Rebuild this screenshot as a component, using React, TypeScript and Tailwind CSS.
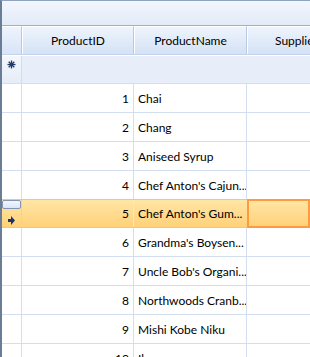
import React from "react";

const rows: [number, string][] = [
  [1, "Chai"],
  [2, "Chang"],
  [3, "Aniseed Syrup"],
  [4, "Chef Anton's Cajun..."],
  [5, "Chef Anton's Gum..."],
  [6, "Grandma's Boysen..."],
  [7, "Uncle Bob's Organi..."],
  [8, "Northwoods Cranb..."],
  [9, "Mishi Kobe Niku"],
  [10, "Ikura"],
];

const font = { fontFamily: '"Segoe UI", Lato, "Liberation Sans", sans-serif' };

export default function App() {
  return (
    <div
      className="w-[310px] h-[357px] overflow-hidden bg-white border-l-2 border-t border-l-[#6b7c96] border-t-[#8fa2bf] flex flex-col text-[12px] text-black"
      style={font}
    >
      {/* group panel */}
      <div className="h-[25px] shrink-0 bg-gradient-to-b from-[#f2f6fd] to-[#e3ebf8] border-b border-[#9eb0cb]" />
      {/* header */}
      <div className="h-[29px] shrink-0 flex border-b border-[#c5d3ea]">
        <div className="w-[20px] shrink-0 bg-gradient-to-b from-[#eef4fc] to-[#d7e4f7] border-r border-[#b9c9e2] border-t border-t-white" />
        <div className="w-[112px] shrink-0 flex items-center justify-center bg-gradient-to-b from-[#eef4fc] to-[#d4e2f6] border-r border-[#b9c9e2] border-l border-l-white border-t border-t-white">
          ProductID
        </div>
        <div className="w-[113px] shrink-0 flex items-center justify-center bg-gradient-to-b from-[#eef4fc] to-[#d4e2f6] border-r border-[#b9c9e2] border-l border-l-white border-t border-t-white">
          ProductName
        </div>
        <div className="flex-1 min-w-0 flex items-center pl-[27px] whitespace-nowrap overflow-hidden bg-gradient-to-b from-[#eef4fc] to-[#d4e2f6] border-l border-l-white border-t border-t-white">
          SupplierID
        </div>
      </div>
      {/* new row */}
      <div className="h-[29px] shrink-0 flex border-b border-[#d3def0] border-t border-t-white">
        <div className="w-[20px] shrink-0 bg-gradient-to-b from-[#f4f7fc] to-[#e6edf8] border-r border-[#d0dcef] flex justify-center pt-[1px]">
          <svg width="9" height="9" viewBox="0 0 9 9" className="mt-[3px]">
            <g stroke="#1f3a6b" strokeWidth="1.3">
              <line x1="4.5" y1="0.5" x2="4.5" y2="8.5" />
              <line x1="0.5" y1="4.5" x2="8.5" y2="4.5" />
              <line x1="1.7" y1="1.7" x2="7.3" y2="7.3" />
              <line x1="7.3" y1="1.7" x2="1.7" y2="7.3" />
            </g>
          </svg>
        </div>
        <div className="flex-1 bg-[#e8eef9]" />
      </div>
      {rows.map(([id, name]) => {
        const sel = id === 5;
        if (sel) {
          return (
            <div key={id} className="h-[29px] shrink-0 flex border-y border-[#ffc65a] bg-gradient-to-b from-[#ffe6a6] to-[#ffd178] -mt-px">
              <div className="w-[20px] shrink-0 border-r border-[#f5d38c] relative">
                <div className="absolute left-0 top-0 w-[19px] h-[9px] rounded-[2px] border border-[#8095b8] bg-gradient-to-b from-[#f3f7fd] to-[#dbe6f6]" />
                <svg width="7" height="9" viewBox="0 0 7 9" className="absolute left-[6px] top-[16px]">
                  <path d="M0 3 H3 V0 L7 4.5 L3 9 V6 H0 Z" fill="#1d3560" />
                </svg>
              </div>
              <div className="w-[112px] shrink-0 flex items-center justify-end pr-[4px] pt-px border-r border-[#ffe7b0]">{id}</div>
              <div className="w-[113px] shrink-0 flex items-center pl-[4px] pt-px whitespace-nowrap overflow-hidden">{name}</div>
              <div className="flex-1 border-2 border-[#ff9b3f] -my-px" />
            </div>
          );
        }
        return (
          <div key={id} className="h-[29px] shrink-0 flex border-b border-[#d3def0]">
            <div className="w-[20px] shrink-0 border-r border-[#d3def0]" />
            <div className="w-[112px] shrink-0 flex items-center justify-end pr-[4px] pt-px border-r border-[#d3def0]">{id}</div>
            <div className="w-[113px] shrink-0 flex items-center pl-[4px] pt-px whitespace-nowrap overflow-hidden border-r border-[#d3def0]">{name}</div>
            <div className="flex-1" />
          </div>
        );
      })}
    </div>
  );
}
